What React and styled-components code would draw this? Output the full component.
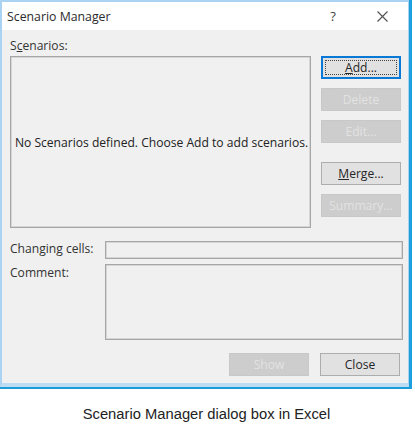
import React from "react";
import styled, { createGlobalStyle } from "styled-components";

const Global = createGlobalStyle`
  html, body { margin: 0; padding: 0; background: #ffffff; }
  body { width: 415px; height: 425px; overflow: hidden; }
`;

const Page = styled.div`
  display: flex;
  flex-direction: column;
  width: 415px;
  height: 425px;
`;

const Frame = styled.div`
  width: 409px;
  border-right: 3px solid #1d9fdc;
  border-bottom: 2px solid #1c9bd9;
`;

const Dialog = styled.div`
  display: flex;
  flex-direction: column;
  border-top: 2px solid #a9d2f3;
  border-left: 2px solid #a9d2f3;
  border-right: 1px solid #a9d2f3;
  border-bottom: 4px solid #bcdcf4;
  font-family: "Open Sans", "Noto Sans", sans-serif;
  font-size: 12.1px;
  color: #1e1e1e;
`;

const TitleBar = styled.div`
  height: 28px;
  background: #ffffff;
  display: flex;
  align-items: center;
  padding-left: 5px;
`;

const Title = styled.div`
  flex: 1;
  font-size: 12.3px;
  color: #2b2b2b;
`;

const HelpMark = styled.div`
  width: 14px;
  margin-right: 37px;
  font-size: 13px;
  color: #444;
  text-align: center;
`;

const CloseX = styled.svg`
  width: 11px;
  height: 11px;
  margin-right: 20px;
`;

const Body = styled.div`
  background: #f0f0f0;
  padding: 8px 6px 7px 8px;
  display: flex;
  flex-direction: column;
`;

const Label = styled.div`
  height: 15px;
  line-height: 15px;
  color: #333333;
  white-space: nowrap;
`;

const TopLabel = styled(Label)`
  margin-bottom: 3px;
`;

const MainRow = styled.div`
  display: grid;
  grid-template-columns: 301px 80px;
  column-gap: 10px;
  height: 172px;
`;

const ListBox = styled.div`
  border: 1px solid #a6a6a6;
  box-shadow: inset 0 0 0 1px #d6d6d6;
  display: flex;
  align-items: center;
  justify-content: center;
  white-space: nowrap;
  color: #222;
  padding-left: 2px;
`;

const ButtonColumn = styled.div`
  display: flex;
  flex-direction: column;
  gap: 9px;
`;

const Button = styled.div`
  box-sizing: border-box;
  width: 80px;
  height: 23px;
  flex: none;
  display: flex;
  align-items: center;
  justify-content: center;
  margin-top: ${(p) => p.$gapAbove || 0}px;
  background: ${(p) => (p.$disabled ? "#cdcdcd" : "#e1e1e1")};
  border: 1px solid
    ${(p) => (p.$focus ? "#0a78d6" : p.$disabled ? "#c8c8c8" : "#adadad")};
  box-shadow: ${(p) => (p.$focus ? "inset 0 0 0 1px #0a78d6" : "none")};
  color: ${(p) => (p.$disabled ? "#e2e2e2" : "#262626")};
  position: relative;
`;

const FocusRect = styled.span`
  position: absolute;
  inset: 3px;
  border: 1px dotted #444;
`;

const Row = styled.div`
  display: grid;
  grid-template-columns: 95px 298px;
  margin-top: ${(p) => p.$top}px;
`;

const Field = styled.div`
  box-sizing: border-box;
  height: ${(p) => p.$h}px;
  border: 1px solid #a6a6a6;
  box-shadow: inset 0 0 0 1px #d6d6d6;
  background: #f0f0f0;
`;

const CommentLabel = styled(Label)`
  padding-top: 1px;
`;

const Footer = styled.div`
  display: flex;
  justify-content: flex-end;
  gap: 11px;
  margin-top: 13px;
  padding-right: 2px;
`;

const Caption = styled.div`
  margin-top: 17px;
  text-align: center;
  font-family: "Liberation Sans", Arial, sans-serif;
  font-size: 14.75px;
  color: #222;
  padding-right: 2px;
`;

export default function App() {
  return (
    <Page>
      <Global />
      <Frame>
        <Dialog>
          <TitleBar>
            <Title>Scenario Manager</Title>
            <HelpMark>?</HelpMark>
            <CloseX viewBox="0 0 11 11">
              <path d="M0.5 0.5 L10.5 10.5 M10.5 0.5 L0.5 10.5" stroke="#555" strokeWidth="1.2" fill="none" />
            </CloseX>
          </TitleBar>
          <Body>
            <TopLabel>
              S<u>c</u>enarios:
            </TopLabel>
            <MainRow>
              <ListBox>No Scenarios defined. Choose Add to add scenarios.</ListBox>
              <ButtonColumn>
                <Button $focus>
                  <FocusRect />
                  <span>
                    <u>A</u>dd...
                  </span>
                </Button>
                <Button $disabled>Delete</Button>
                <Button $disabled>Edit...</Button>
                <Button $gapAbove={10}>
                  <span>
                    <u>M</u>erge...
                  </span>
                </Button>
                <Button $disabled>Summary...</Button>
              </ButtonColumn>
            </MainRow>
            <Row $top={13}>
              <Label>Changing cells:</Label>
              <Field $h={18} />
            </Row>
            <Row $top={5}>
              <CommentLabel>Comment:</CommentLabel>
              <Field $h={76} />
            </Row>
            <Footer>
              <Button $disabled>Show</Button>
              <Button>Close</Button>
            </Footer>
          </Body>
        </Dialog>
      </Frame>
      <Caption>Scenario Manager dialog box in Excel</Caption>
    </Page>
  );
}
